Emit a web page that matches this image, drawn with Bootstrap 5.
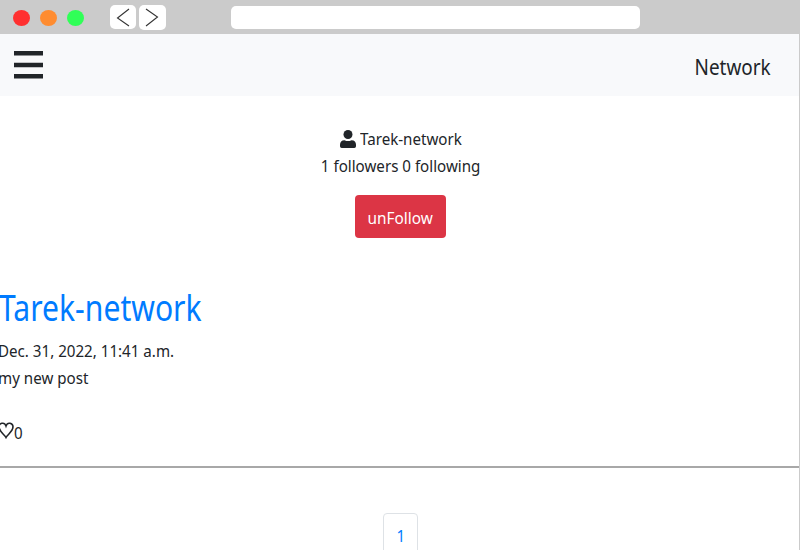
<!DOCTYPE html>
<html lang="en">
<head>
<meta charset="utf-8">
<meta name="viewport" content="width=device-width, initial-scale=1">
<title>Network</title>
<link href="https://cdn.jsdelivr.net/npm/bootstrap@5.3.0/dist/css/bootstrap.min.css" rel="stylesheet">
<style>
body{font-family:"Noto Sans","Open Sans",sans-serif;font-size:17px;line-height:27px;color:#212529;height:550px;overflow:hidden}
.chrome-bar{height:34px;background:#cbcbcb;padding-left:13px}
.dot{width:17px;height:16px;border-radius:50%;margin:2px 10px 0 0}
.dot-red{background:#ff3030}.dot-orange{background:#ff8c30}.dot-green{background:#30ff57}
.chrome-btn{width:26px;height:24px;border-radius:5px;background:#fff;margin-right:3px}
.chrome-btn + .chrome-btn{width:27px;height:25px}
.chrome-btn svg{display:block}
.address{width:409px;height:23px;border-radius:5px;background:#fff;margin-left:62px}
.page{height:516px;border-right:1px solid #cbcbcb;overflow:hidden}
.topbar{height:62px;background:#f8f9fb;padding:0 28px 0 14px}
.narrow{display:inline-block;white-space:nowrap;transform:scaleX(.89);transform-origin:0 50%}
.narrow-mid{transform-origin:50% 50%}
.brand{font-size:21.5px;transform:scaleX(.88);transform-origin:100% 50%;padding:2px 1px 0 0}
.profile{padding:29px 0 0 2px}
.profile-name{width:122px}
.profile-count{margin-bottom:16px}
.btn-unfollow{--bs-btn-bg:#dc3545;width:91px;height:43px;font-size:17px;line-height:27px;border-radius:4px;padding:2px 0 0;border:0}
.btn-unfollow .narrow{transform:scaleX(.905)}
.post{padding-top:43px;height:228px}
.post-title{font-size:35.5px;line-height:52px;color:#007bff;margin:0 0 4px -1px}
.post-title .narrow{transform:scaleX(.848)}
.post-line{margin-left:-2px}
.likes{margin-top:28px}
.likes svg{margin-top:-5px}
.rule{height:2px;background:#a8a8a8}
.pages{margin-top:45px;padding-left:2px}
.page-one{width:35px;height:45px;border:1px solid #dee2e6;border-radius:4px;color:#007bff;padding-top:8px;text-decoration:none}
</style>
<script src="https://cdn.jsdelivr.net/npm/bootstrap@5.3.0/dist/js/bootstrap.bundle.min.js"></script>
</head>
<body>
<div class="chrome-bar d-flex align-items-center">
  <span class="dot dot-red"></span><span class="dot dot-orange"></span><span class="dot dot-green"></span>
  <div class="d-flex ms-3">
    <div class="chrome-btn"><svg width="26" height="24" fill="none" stroke="#333" stroke-width="1.1"><path d="M19 4 7.500 13 19 21"/></svg></div>
    <div class="chrome-btn"><svg width="27" height="25" fill="none" stroke="#333" stroke-width="1.1"><path d="M7 4 18.500 12 7 21"/></svg></div>
  </div>
  <div class="address"></div>
</div>
<div class="page">
  <nav class="topbar d-flex justify-content-between align-items-center">
    <svg width="29" height="28" fill="#212529"><path d="M0 0h29v4.500H0zM0 11.800h29v4.500H0zM0 23h29v4.500H0z"/></svg>
    <span class="brand narrow">Network</span>
  </nav>
  <section class="profile d-flex flex-column align-items-center">
    <div class="profile-name d-flex align-items-center">
      <svg class="flex-shrink-0" width="16" height="18" viewBox="0 0 16 18" fill="#212529"><circle cx="8" cy="4.500" r="4.500"/><path d="M4.500 10.200Q8 12 11.500 10.200C14.500 10.200 16 12.300 16 14.800V16.300Q16 18 14.300 18H1.700Q0 18 0 16.300V14.800C0 12.300 1.500 10.200 4.500 10.200Z"/></svg>
      <span class="narrow ms-1">Tarek-network</span>
    </div>
    <div class="profile-count"><span class="narrow narrow-mid">1 followers 0 following</span></div>
    <button class="btn btn-danger btn-unfollow"><span class="narrow narrow-mid">unFollow</span></button>
  </section>
  <article class="post">
    <h1 class="post-title fw-normal"><span class="narrow">Tarek-network</span></h1>
    <div class="post-line"><span class="narrow">Dec. 31, 2022, 11:41 a.m.</span></div>
    <div class="post-line"><span class="narrow">my new post</span></div>
    <div class="likes d-flex align-items-center">
      <svg width="14" height="17" fill="none" stroke="#212529" stroke-width="1.6"><path d="M6 15.500C4.500 12.500-1 9.500-1 4.800C-1 1 4.500-.5 6 4C7.500-.5 13 1 13 4.800C13 9.500 7.500 12.500 6 15.500Z"/></svg>
      <span class="narrow">0</span>
    </div>
  </article>
  <div class="rule"></div>
  <div class="pages d-flex justify-content-center"><a href="#" class="page-one text-center"><span class="narrow narrow-mid">1</span></a></div>
</div>
</body>
</html>
